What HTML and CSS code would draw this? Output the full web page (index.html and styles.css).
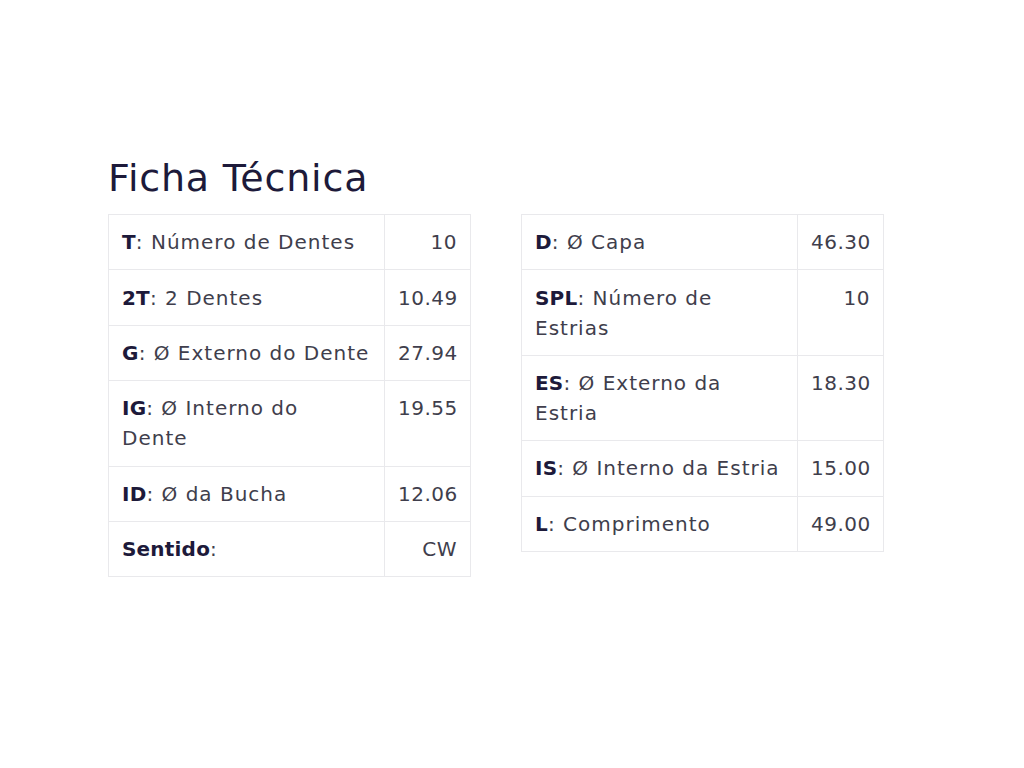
FILE: index.html
```html
<!DOCTYPE html>
<html lang="pt">
<head>
<meta charset="utf-8">
<title>Ficha Técnica</title>
<link rel="stylesheet" href="styles.css">
</head>
<body>
<main class="page">
  <h2 class="title">Ficha Técnica</h2>
  <div class="tables">
    <table class="spec">
      <tr><td class="lbl"><b>T</b>: Número de Dentes</td><td class="val">10</td></tr>
      <tr><td class="lbl"><b>2T</b>: 2 Dentes</td><td class="val">10.49</td></tr>
      <tr><td class="lbl"><b>G</b>: Ø Externo do Dente</td><td class="val">27.94</td></tr>
      <tr><td class="lbl"><b>IG</b>: Ø Interno do Dente</td><td class="val">19.55</td></tr>
      <tr><td class="lbl"><b>ID</b>: Ø da Bucha</td><td class="val">12.06</td></tr>
      <tr><td class="lbl"><b>Sentido</b>:</td><td class="val">CW</td></tr>
    </table>
    <table class="spec">
      <tr><td class="lbl"><b>D</b>: Ø Capa</td><td class="val">46.30</td></tr>
      <tr><td class="lbl"><b>SPL</b>: Número de Estrias</td><td class="val">10</td></tr>
      <tr><td class="lbl"><b>ES</b>: Ø Externo da Estria</td><td class="val">18.30</td></tr>
      <tr><td class="lbl"><b>IS</b>: Ø Interno da Estria</td><td class="val">15.00</td></tr>
      <tr><td class="lbl"><b>L</b>: Comprimento</td><td class="val">49.00</td></tr>
    </table>
  </div>
</main>
</body>
</html>
```
FILE: styles.css
```css
html, body {
  margin: 0;
  padding: 0;
  background: #ffffff;
}
body {
  font-family: "DejaVu Sans", "Open Sans", sans-serif;
  color: #403e4c;
}
.page {
  padding: 153px 0 0 108px;
}
.title {
  margin: 0 0 11px 0;
  font-size: 38px;
  line-height: 50px;
  font-weight: 400;
  color: #1d1a3a;
  letter-spacing: 0.8px;
}
.tables {
  display: flex;
  gap: 50px;
  align-items: flex-start;
}
.spec {
  border-collapse: collapse;
  width: 363px;
  table-layout: fixed;
  font-size: 20px;
  line-height: 30px;
  letter-spacing: 1px;
}
.spec td {
  border: 1px solid #e9e9ec;
  padding: 12.2px 13px;
  vertical-align: top;
}
.spec .lbl {
  width: 249px;
}
.spec .val {
  text-align: right;
  letter-spacing: 0.5px;
}
.spec b {
  font-weight: 700;
  color: #1d1a3a;
  letter-spacing: 0.2px;
}
```
